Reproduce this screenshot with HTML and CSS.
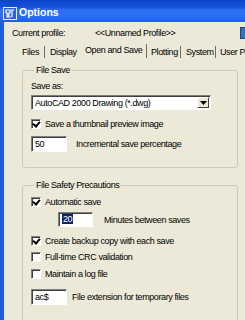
FILE: index.html
```html
<!DOCTYPE html>
<html>
<head>
<meta charset="utf-8">
<link rel="stylesheet" href="styles.css">
</head>
<body>
<div class="window">
  <div class="titlebar">
    <svg class="appicon" width="14" height="13" viewBox="0 0 14 13">
      <rect x="0.5" y="0.5" width="13" height="12" fill="#2d63d8" stroke="#e8eefc"/>
      <path d="M3 3h4v3H3zM8 3h3M9 3v7M3 8h4M5 6v4M3 10h5" stroke="#ffffff" stroke-width="1.2" fill="none"/>
    </svg>
    <span class="title">Options</span>
  </div>
  <div class="content">
    <div class="profile">
      <span class="profile-label">Current profile:</span>
      <span class="profile-name">&lt;&lt;Unnamed Profile&gt;&gt;</span>
      <span class="profile-icon"></span>
    </div>
    <div class="tabs">
      <span class="tab t1">Files</span>
      <span class="tab t2">Display</span>
      <span class="tab t3 active">Open and Save</span>
      <span class="tab t4">Plotting</span>
      <span class="tab t5">System</span>
      <span class="tab t6">User Preferences</span>
    </div>
    <div class="panel">
      <fieldset class="group g1">
        <legend>File Save</legend>
        <div class="row label-row">Save as:</div>
        <div class="combo">
          <span class="combo-text">AutoCAD 2000 Drawing (*.dwg)</span>
          <span class="combo-btn"><svg width="7" height="4" viewBox="0 0 7 4"><path d="M0 0h7L3.5 4z" fill="#000"/></svg></span>
        </div>
        <div class="row check-row r-thumb"><span class="cb checked"></span><span>Save a thumbnail preview image</span></div>
        <div class="row field-row r-incr"><span class="edit w36">50</span><span class="flabel gap9">Incremental save percentage</span></div>
      </fieldset>
      <fieldset class="group g2">
        <legend>File Safety Precautions</legend>
        <div class="row check-row r-auto"><span class="cb checked"></span><span>Automatic save</span></div>
        <div class="row field-row r-min"><span class="edit w35 indent"><span class="sel">20</span></span><span class="flabel gap11">Minutes between saves</span></div>
        <div class="row check-row r-backup"><span class="cb checked"></span><span>Create backup copy with each save</span></div>
        <div class="row check-row r-crc"><span class="cb"></span><span>Full-time CRC validation</span></div>
        <div class="row check-row r-log"><span class="cb"></span><span>Maintain a log file</span></div>
        <div class="row field-row r-ext"><span class="edit w36">ac$</span><span class="flabel gap5">File extension for temporary files</span></div>
      </fieldset>
    </div>
  </div>
</div>
</body>
</html>
```

FILE: styles.css
```css
html, body {
  margin: 0;
  padding: 0;
}
body {
  width: 245px;
  height: 320px;
  overflow: hidden;
  background: #ece9d8;
  font-family: "Liberation Sans", Arial, sans-serif;
  font-size: 9px;
  letter-spacing: -0.4px;
  color: #000;
}
.window {
  height: 320px;
  border-left: 4px solid #1f5ddf;
  box-sizing: border-box;
  display: flex;
  flex-direction: column;
}
.titlebar {
  height: 22px;
  flex: none;
  display: flex;
  align-items: center;
  background: linear-gradient(to bottom, #0c44c8 0, #1650d8 7px, #2c72f1 10px, #2a6ef0 17px, #1e5fe0 22px);
  margin-left: -4px;
  padding-left: 3px;
}
.appicon {
  margin-top: 5px;
}
.title {
  color: #fff;
  font-weight: bold;
  font-size: 10.5px;
  letter-spacing: 0;
  margin-left: 2px;
  margin-top: 1px;
}
.content {
  flex: 1;
  overflow: hidden;
}
.profile {
  display: flex;
  align-items: center;
  height: 12px;
  margin-top: 5px;
  padding-left: 8px;
  white-space: nowrap;
}
.profile-label {
  width: 83px;
  flex: none;
}
.profile-icon {
  margin-left: auto;
  width: 4px;
  height: 10px;
  background: #3c6fb8;
  border: 1px solid #24456f;
  border-right: none;
}
.tabs {
  display: flex;
  margin-top: 5px;
  height: 14px;
  white-space: nowrap;
  padding-left: 10px;
  overflow: hidden;
}
.tab {
  flex: none;
  box-sizing: border-box;
  height: 12px;
  margin-top: 2px;
  line-height: 12px;
  border-right: 1px solid #6e6b60;
}
.tab.t1 { width: 31px; padding-left: 8px; }
.tab.t2 { width: 36px; padding-left: 5px; border-right: none; }
.tab.t3 { width: 66px; padding-left: 4px; }
.tab.active {
  margin-top: 0;
  height: 14px;
  line-height: 12px;
}
.tab.t4 { width: 34px; padding-left: 4px; }
.tab.t5 { width: 35px; padding-left: 5px; }
.tab.t6 { padding-left: 4px; border-right: none; }
.panel {
  padding-top: 6px;
  padding-left: 18px;
}
.group {
  margin: 0;
  width: 216px;
  box-sizing: border-box;
  padding: 0 0 0 8px;
  border: 1px solid #cfcbba;
  border-radius: 3px;
}
.group legend {
  padding: 0 2px;
  margin-left: 3px;
  line-height: 12px;
  color: #000;
}
.g1 {
  padding-bottom: 15px;
}
.g2 {
  margin-top: 11px;
  height: 160px;
}
.row {
  display: flex;
  align-items: center;
  white-space: nowrap;
}
.label-row {
  height: 12px;
  margin-top: 4px;
}
.combo {
  margin-top: 3px;
  width: 180px;
  height: 15px;
  box-sizing: border-box;
  background: #fff;
  border-top: 1px solid #7f7d73;
  border-left: 1px solid #7f7d73;
  border-right: 1px solid #fff;
  border-bottom: 1px solid #fff;
  box-shadow: inset 1px 1px 0 #404040;
  display: flex;
  align-items: center;
  padding-left: 3px;
}
.combo-text {
  flex: 1;
}
.combo-btn {
  width: 12px;
  height: 11px;
  margin-right: 1px;
  background: #ece9d8;
  border-top: 1px solid #fff;
  border-left: 1px solid #fff;
  border-right: 1px solid #404040;
  border-bottom: 1px solid #404040;
  box-sizing: border-box;
  display: flex;
  align-items: center;
  justify-content: center;
}
.check-row {
  height: 12px;
}
.r-thumb { margin-top: 8px; }
.cb {
  width: 10px;
  height: 10px;
  box-sizing: border-box;
  background: #fff;
  border-top: 1px solid #808080;
  border-left: 1px solid #808080;
  border-right: 1px solid #fff;
  border-bottom: 1px solid #fff;
  box-shadow: inset 1px 1px 0 #404040;
  margin-right: 4px;
  position: relative;
  flex: none;
}
.cb.checked::after {
  content: "";
  position: absolute;
  left: 2px;
  top: 0px;
  width: 3px;
  height: 5px;
  border-right: 2px solid #000;
  border-bottom: 2px solid #000;
  transform: rotate(40deg);
}
.edit {
  height: 16px;
  box-sizing: border-box;
  background: #fff;
  border-top: 1px solid #808080;
  border-left: 1px solid #808080;
  border-right: 1px solid #fff;
  border-bottom: 1px solid #fff;
  box-shadow: inset 1px 1px 0 #404040;
  padding-left: 3px;
  line-height: 14px;
  flex: none;
}
.w36 { width: 36px; }
.w35 { width: 35px; height: 15px; line-height: 13px; }
.indent { margin-left: 27px; }
.sel {
  background: #0a246a;
  color: #fff;
  padding: 0 1px;
}
.gap9 { margin-left: 9px; }
.gap11 { margin-left: 11px; }
.gap5 { margin-left: 5px; }
.field-row { height: 16px; }
.r-incr { margin-top: 6px; }
.r-auto { margin-top: 5px; }
.r-min { margin-top: 4px; height: 15px; }
.r-backup { margin-top: 8px; }
.r-crc { margin-top: 4px; }
.r-log { margin-top: 5px; }
.r-ext { margin-top: 9px; }
```
